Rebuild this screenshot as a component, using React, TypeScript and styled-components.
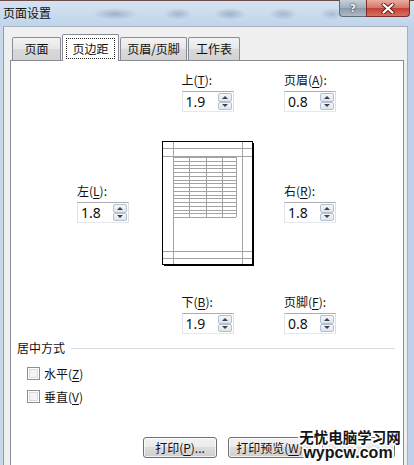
import React from "react";
import styled, { createGlobalStyle } from "styled-components";

const Global = createGlobalStyle`
  html, body { margin: 0; padding: 0; }
  body {
    width: 414px; height: 465px; overflow: hidden;
    font-family: "Noto Sans CJK SC", "Noto Sans", sans-serif;
    color: #1b1b1b;
  }
`;

const Window = styled.div`
  position: relative;
  width: 414px;
  height: 465px;
  overflow: hidden;
  display: flex;
  flex-direction: column;
  background: linear-gradient(90deg, #c9d9eb, #bfd2e8);
`;

const TitleBar = styled.div`
  flex: none;
  height: 26px;
  box-sizing: border-box;
  border-top: 1px solid #6c4a4a;
  display: flex;
  justify-content: space-between;
  align-items: flex-start;
  background:
    radial-gradient(ellipse 22px 6px at 115px 13px, rgba(96, 116, 146, 0.4), transparent),
    radial-gradient(ellipse 14px 6px at 178px 13px, rgba(96, 116, 146, 0.35), transparent),
    radial-gradient(ellipse 16px 6px at 230px 13px, rgba(96, 116, 146, 0.4), transparent),
    radial-gradient(ellipse 14px 6px at 283px 13px, rgba(96, 116, 146, 0.35), transparent),
    radial-gradient(ellipse 12px 6px at 332px 13px, rgba(96, 116, 146, 0.3), transparent),
    linear-gradient(#d4e3f2, #c0d4ea);
`;

const Title = styled.div`
  padding: 4px 0 0 3px;
  font-size: 12px;
  line-height: 16px;
  color: #111;
`;

const Caption = styled.div`
  display: flex;
  margin: -1px 4px 0 0;
`;

const HelpButton = styled.div`
  width: 27px;
  height: 17px;
  box-sizing: border-box;
  border: 1px solid #5d6b7c;
  border-top: none;
  border-right: none;
  border-radius: 0 0 0 4px;
  background: linear-gradient(#c6cfd9, #a3afbd 48%, #8d9aab 52%, #aebac7);
  display: flex;
  align-items: center;
  justify-content: center;
  font-family: "DejaVu Sans", sans-serif;
  font-weight: bold;
  font-size: 11px;
  color: #f4f6f8;
  text-shadow: 0 0 2px #2c3744, 0 0 1px #2c3744;
`;

const CloseButton = styled.div`
  width: 44px;
  height: 17px;
  box-sizing: border-box;
  border: 1px solid #7a2d2a;
  border-top: none;
  border-radius: 0 0 4px 0;
  background: linear-gradient(#e9ad9f, #d5786a 48%, #c2413a 52%, #d8705f);
  display: flex;
  align-items: center;
  justify-content: center;
`;

const Client = styled.div`
  flex: 1;
  margin: 0 6px 0 3px;
  background: #f0f0f0;
  border-left: 1px solid #8c9cb0;
  border-top: 1px solid #a3b1c1;
  border-right: 1px solid #a3b1c1;
  padding: 7px 3px 0 6px;
  display: flex;
  flex-direction: column;
  min-height: 0;
`;

const TabStrip = styled.div`
  display: flex;
  align-items: flex-end;
  gap: 1px;
  height: 26px;
  padding-left: 2px;
  flex: none;
`;

const Tab = styled.div<{ $w: number; $active?: boolean }>`
  position: relative;
  z-index: ${(p) => (p.$active ? 2 : 1)};
  width: ${(p) => p.$w}px;
  height: ${(p) => (p.$active ? 27 : 23)}px;
  margin-bottom: ${(p) => (p.$active ? -1 : 0)}px;
  box-sizing: border-box;
  border: 1px solid #898c95;
  border-bottom: none;
  border-radius: 2px 2px 0 0;
  background: ${(p) =>
    p.$active ? "#ffffff" : "linear-gradient(#f3f3f3, #e6e6e6 50%, #d9d9d9 51%, #d3d3d3)"};
  display: flex;
  padding: ${(p) => (p.$active ? "3px 3px 2px" : "0")};
  font-size: 12px;
  line-height: 16px;
  color: #111;
`;

const TabLabel = styled.div<{ $focus?: boolean }>`
  flex: 1;
  display: flex;
  align-items: center;
  justify-content: center;
  border: 1px dotted ${(p) => (p.$focus ? "#222" : "transparent")};
`;

const Panel = styled.div`
  flex: 1;
  position: relative;
  z-index: 1;
  background: #ffffff;
  border: 1px solid #898c95;
  border-bottom: none;
  display: flex;
  flex-direction: column;
`;

const MarginsGrid = styled.div`
  display: grid;
  grid-template-columns: 54px 93px 53px;
  grid-template-rows: 40px 126px 40px;
  column-gap: 30px;
  row-gap: 28px;
  padding: 11px 0 0 66px;
`;

const Cell = styled.div<{ $col: number; $row: number; $center?: boolean }>`
  grid-column: ${(p) => p.$col};
  grid-row: ${(p) => p.$row};
  justify-self: ${(p) => (p.$center ? "center" : "start")};
  align-self: center;
`;

const Field = styled.div`
  display: flex;
  flex-direction: column;
  gap: 3px;
  width: 52px;
`;

const Label = styled.div`
  font-size: 12px;
  line-height: 16px;
  white-space: nowrap;
  color: #111;
  u { text-decoration-thickness: 1px; text-underline-offset: 2px; }
`;

const SpinBox = styled.div`
  width: 52px;
  height: 21px;
  box-sizing: border-box;
  border: 1px solid #abadb3;
  border-color: #abadb3 #dbdfe6 #e3e9ef #e2e3ea;
  background: #fff;
  display: flex;
  align-items: stretch;
`;

const Value = styled.div`
  flex: 1;
  padding-left: 3px;
  font-family: "Noto Sans", "Open Sans", sans-serif;
  font-size: 14px;
  line-height: 19px;
  color: #111;
`;

const Spinner = styled.div`
  width: 14px;
  margin: 1px 1px 1px 0;
  display: flex;
  flex-direction: column;
`;

const SpinHalf = styled.div<{ $down?: boolean }>`
  flex: 1;
  box-sizing: border-box;
  border: 1px solid #b4c0cd;
  border-radius: 2px;
  background: linear-gradient(#f5f7fa, #dfe5ec);
  display: flex;
  align-items: center;
  justify-content: center;
  &::after {
    content: "";
    width: 0;
    height: 0;
    border-left: 3px solid transparent;
    border-right: 3px solid transparent;
    ${(p) => (p.$down ? "border-top: 3px solid #3a4350;" : "border-bottom: 3px solid #3a4350;")}
  }
`;

const PreviewSvg = styled.svg`
  display: block;
`;

const GroupHeader = styled.div`
  display: flex;
  align-items: center;
  gap: 6px;
  margin: 6px 8px 0 6px;
  font-size: 12px;
  line-height: 16px;
  color: #111;
`;

const GroupLine = styled.div`
  flex: 1;
  height: 1px;
  background: #d5dfe5;
`;

const CheckList = styled.div`
  display: flex;
  flex-direction: column;
  gap: 7px;
  margin-top: 9px;
  padding-left: 16px;
`;

const CheckRow = styled.div`
  display: flex;
  align-items: center;
  gap: 4px;
  height: 16px;
  font-size: 12px;
  color: #111;
  u { text-decoration-thickness: 1px; text-underline-offset: 2px; }
`;

const CheckBox = styled.div`
  width: 13px;
  height: 13px;
  box-sizing: border-box;
  border: 1px solid #8f8f8f;
  background: #f4f4f4;
  box-shadow: inset 0 0 0 1px #fff, inset 0 0 0 2px #dcdcdc;
`;

const ButtonRow = styled.div`
  display: flex;
  justify-content: flex-end;
  gap: 11px;
  margin-top: 33px;
  padding-right: 8px;
`;

const Button = styled.div<{ $w: number }>`
  width: ${(p) => p.$w}px;
  height: 21px;
  box-sizing: border-box;
  border: 1px solid #707070;
  border-radius: 3px;
  background: linear-gradient(#f2f2f2, #ebebeb 45%, #dddddd 50%, #cfcfcf);
  box-shadow: inset 0 0 0 1px rgba(255, 255, 255, 0.7);
  display: flex;
  align-items: center;
  justify-content: center;
  font-size: 12px;
  color: #111;
  u { text-decoration-thickness: 1px; text-underline-offset: 2px; }
`;

const Watermark = styled.div`
  position: absolute;
  z-index: 10;
  right: 12px;
  top: 428px;
  width: 104px;
  display: flex;
  flex-direction: column;
  align-items: center;
  color: #151515;
  font-weight: bold;
  text-shadow:
    1px 0 0 #fff, -1px 0 0 #fff, 0 1px 0 #fff, 0 -1px 0 #fff,
    1px 1px 0 #fff, -1px -1px 0 #fff, 1px -1px 0 #fff, -1px 1px 0 #fff,
    2px 0 1px #fff, -2px 0 1px #fff, 0 2px 1px #fff, 0 -2px 1px #fff;
`;

const WmCn = styled.div`
  font-family: "Noto Sans CJK SC", sans-serif;
  font-size: 14.5px;
  line-height: 17px;
  white-space: nowrap;
`;

const WmEn = styled.div`
  font-family: "Liberation Sans", Arial, sans-serif;
  font-size: 16px;
  line-height: 16px;
  margin-left: -4px;
  white-space: nowrap;
`;

type SpinProps = { label: React.ReactNode; value: string };

function SpinField({ label, value }: SpinProps) {
  return (
    <Field>
      <Label>{label}</Label>
      <SpinBox>
        <Value>{value}</Value>
        <Spinner>
          <SpinHalf />
          <SpinHalf $down />
        </Spinner>
      </SpinBox>
    </Field>
  );
}

function PagePreview() {
  const rows: number[] = [];
  for (let i = 0; i <= 16; i++) rows.push(17 + i * 3.75);
  const cols = [12, 28, 45, 61, 75];
  const g = "#a3a3a3";
  return (
    <PreviewSvg width={93} height={126} viewBox="0 0 93 126">
      <rect x={1.5} y={1.5} width={90} height={123} fill="#fff" stroke="#000" strokeWidth={1} />
      <line x1={92.5} y1={3} x2={92.5} y2={126} stroke="#000" strokeWidth={1} />
      <line x1={3} y1={125.5} x2={93} y2={125.5} stroke="#000" strokeWidth={1} />
      {[12.5, 81.5].map((x) => (
        <line key={"v" + x} x1={x} y1={2} x2={x} y2={124} stroke={g} strokeWidth={1} />
      ))}
      {[8.5, 16.5, 111.5, 118.5].map((y) => (
        <line key={"h" + y} x1={2} y1={y} x2={91} y2={y} stroke={g} strokeWidth={1} />
      ))}
      {rows.map((y, i) => (
        <line key={"r" + i} x1={12} y1={Math.round(y) + 0.5} x2={75} y2={Math.round(y) + 0.5} stroke={g} strokeWidth={1} />
      ))}
      {cols.map((x) => (
        <line key={"c" + x} x1={x + 0.5} y1={17} x2={x + 0.5} y2={77} stroke={g} strokeWidth={1} />
      ))}
    </PreviewSvg>
  );
}

export default function App() {
  return (
    <>
      <Global />
      <Window>
        <TitleBar>
          <Title>页面设置</Title>
          <Caption>
            <HelpButton>?</HelpButton>
            <CloseButton>
              <svg width="14" height="11" viewBox="0 0 14 11">
                <path d="M2.5 1.5 L11.5 9.5 M11.5 1.5 L2.5 9.5" stroke="#5a1c18" strokeWidth="4" strokeLinecap="round" />
                <path d="M2.5 1.5 L11.5 9.5 M11.5 1.5 L2.5 9.5" stroke="#ffffff" strokeWidth="2.2" strokeLinecap="round" />
              </svg>
            </CloseButton>
          </Caption>
        </TitleBar>
        <Client>
          <TabStrip>
            <Tab $w={49}>
              <TabLabel>页面</TabLabel>
            </Tab>
            <Tab $w={57} $active>
              <TabLabel $focus>页边距</TabLabel>
            </Tab>
            <Tab $w={67}>
              <TabLabel>页眉/页脚</TabLabel>
            </Tab>
            <Tab $w={52}>
              <TabLabel>工作表</TabLabel>
            </Tab>
          </TabStrip>
          <Panel>
            <MarginsGrid>
              <Cell $col={2} $row={1} $center>
                <SpinField label={<>上(<u>T</u>):</>} value="1.9" />
              </Cell>
              <Cell $col={3} $row={1}>
                <SpinField label={<>页眉(<u>A</u>):</>} value="0.8" />
              </Cell>
              <Cell $col={1} $row={2}>
                <SpinField label={<>左(<u>L</u>):</>} value="1.8" />
              </Cell>
              <Cell $col={2} $row={2} $center>
                <PagePreview />
              </Cell>
              <Cell $col={3} $row={2}>
                <SpinField label={<>右(<u>R</u>):</>} value="1.8" />
              </Cell>
              <Cell $col={2} $row={3} $center>
                <SpinField label={<>下(<u>B</u>):</>} value="1.9" />
              </Cell>
              <Cell $col={3} $row={3}>
                <SpinField label={<>页脚(<u>F</u>):</>} value="0.8" />
              </Cell>
            </MarginsGrid>
            <GroupHeader>
              <span>居中方式</span>
              <GroupLine />
            </GroupHeader>
            <CheckList>
              <CheckRow>
                <CheckBox />
                <span>水平(<u>Z</u>)</span>
              </CheckRow>
              <CheckRow>
                <CheckBox />
                <span>垂直(<u>V</u>)</span>
              </CheckRow>
            </CheckList>
            <ButtonRow>
              <Button $w={74}>打印(<u>P</u>)...</Button>
              <Button $w={83}>打印预览(<u>W</u>)</Button>
              <Button $w={73} />
            </ButtonRow>
          </Panel>
        </Client>
        <Watermark>
          <WmCn>无忧电脑学习网</WmCn>
          <WmEn>wypcw.com</WmEn>
        </Watermark>
      </Window>
    </>
  );
}
